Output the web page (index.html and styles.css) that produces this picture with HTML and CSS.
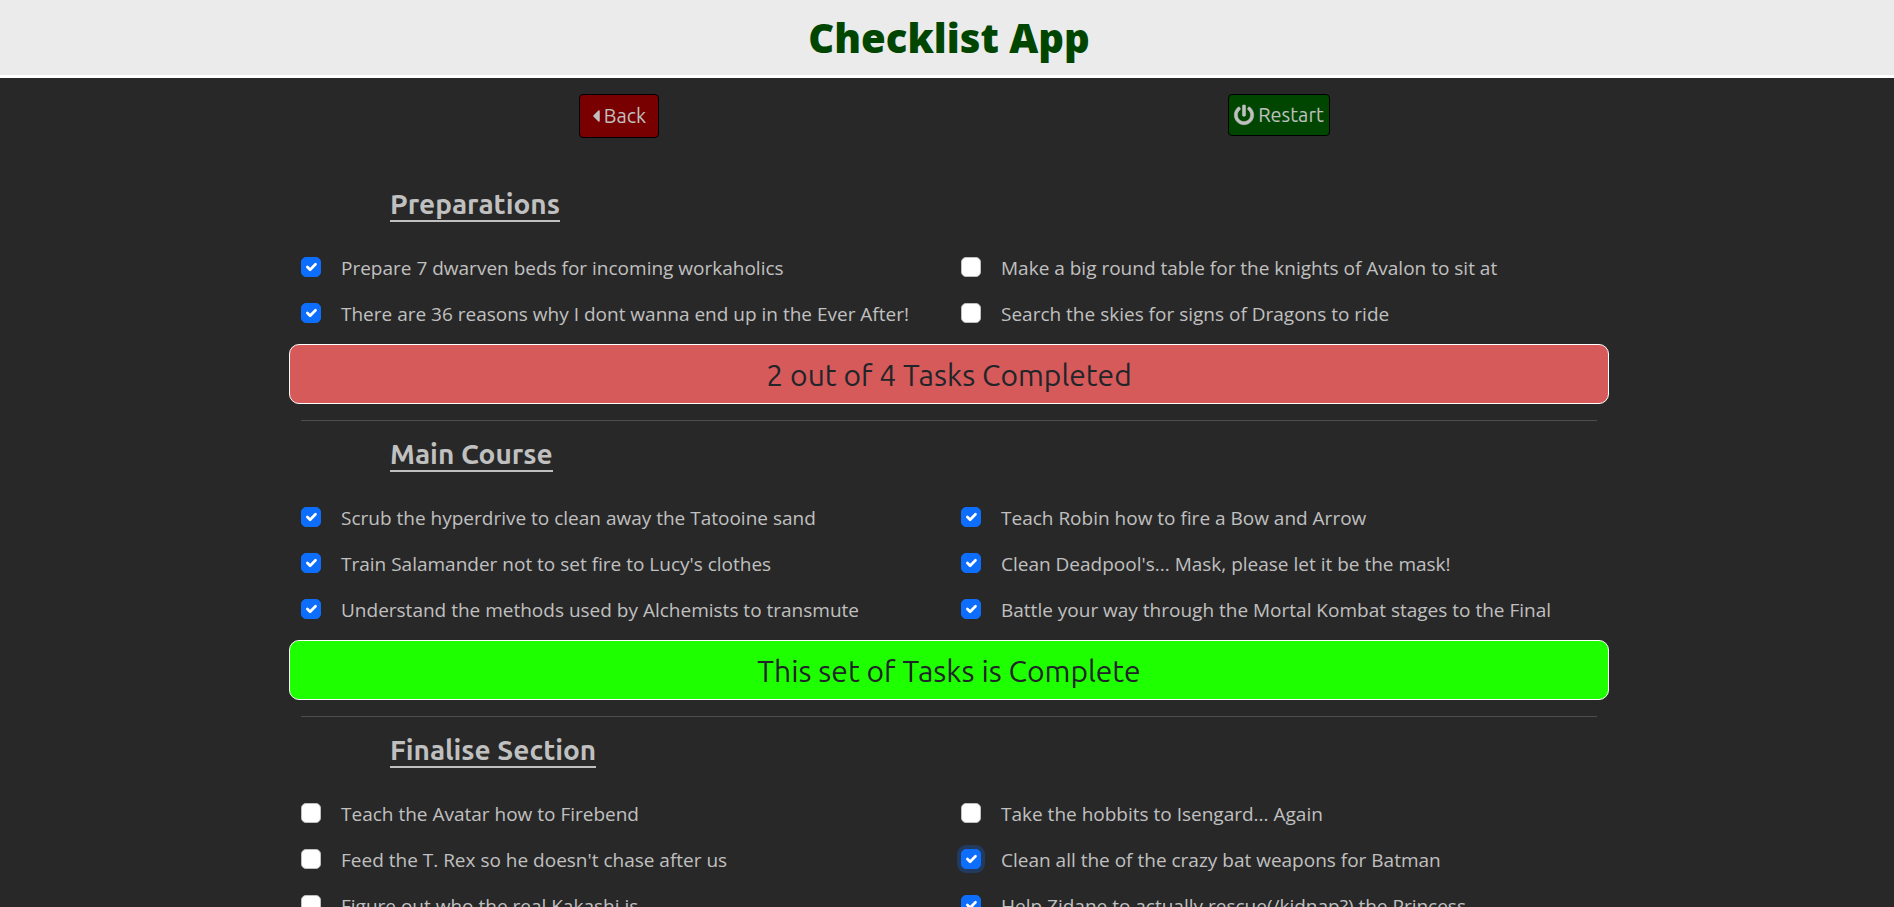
FILE: index.html
```html
<!DOCTYPE html>
<html lang="en">
<head>
<meta charset="utf-8">
<meta name="viewport" content="width=device-width, initial-scale=1">
<title>Checklist App</title>
<link rel="stylesheet" href="styles.css">
</head>
<body>
<header class="banner"><h1 class="banner-title">Checklist App</h1></header>
<main class="page">
  <div class="container">
    <nav class="actions" aria-label="Checklist actions">
      <button type="button" class="btn btn-back">
        <svg class="icon-caret" viewBox="0 0 192 512" aria-hidden="true"><path fill="currentColor" d="M192 127.338v257.324c0 17.818-21.543 26.741-34.142 14.142L29.196 270.142c-7.81-7.81-7.81-20.474 0-28.284l128.662-128.662c12.599-12.6 34.142-3.676 34.142 14.142z"/></svg>
        <span>Back</span>
      </button>
      <button type="button" class="btn btn-restart">
        <svg class="icon-power" viewBox="0 0 512 512" aria-hidden="true"><path fill="currentColor" stroke="currentColor" stroke-width="14" d="M400 54.1c63 45 104 118.6 104 201.9 0 136.8-110.8 247.7-247.5 248C120 504.3 8.2 393 8 256.4 7.9 173.1 48.9 99.3 111.8 54.2c11.7-8.3 28-4.8 35 7.7L162.6 90c5.9 10.5 3.1 23.8-6.6 31-41.5 30.8-68 79.6-68 134.9-.1 92.3 74.5 168.1 168 168.1 91.6 0 168.6-74.2 168-169.1-.3-51.8-24.7-101.8-68.1-134-9.7-7.2-12.4-20.5-6.5-30.9l15.8-28.1c7-12.4 23.2-16.1 34.8-7.8zM296 264V24c0-13.3-10.7-24-24-24h-32c-13.3 0-24 10.7-24 24v240c0 13.3 10.7 24 24 24h32c13.3 0 24-10.7 24-24z"/></svg>
        <span>Restart</span>
      </button>
    </nav>

    <section class="section">
      <h2 class="section-title">Preparations</h2>
      <div class="tasks">
        <label class="task"><input type="checkbox" class="check" checked><span>Prepare 7 dwarven beds for incoming workaholics</span></label>
        <label class="task"><input type="checkbox" class="check"><span>Make a big round table for the knights of Avalon to sit at</span></label>
        <label class="task"><input type="checkbox" class="check" checked><span>There are 36 reasons why I dont wanna end up in the Ever After!</span></label>
        <label class="task"><input type="checkbox" class="check"><span>Search the skies for signs of Dragons to ride</span></label>
      </div>
      <p class="status status-pending">2 out of 4 Tasks Completed</p>
    </section>

    <hr class="divider">

    <section class="section">
      <h2 class="section-title">Main Course</h2>
      <div class="tasks">
        <label class="task"><input type="checkbox" class="check" checked><span>Scrub the hyperdrive to clean away the Tatooine sand</span></label>
        <label class="task"><input type="checkbox" class="check" checked><span>Teach Robin how to fire a Bow and Arrow</span></label>
        <label class="task"><input type="checkbox" class="check" checked><span>Train Salamander not to set fire to Lucy's clothes</span></label>
        <label class="task"><input type="checkbox" class="check" checked><span>Clean Deadpool's... Mask, please let it be the mask!</span></label>
        <label class="task"><input type="checkbox" class="check" checked><span>Understand the methods used by Alchemists to transmute</span></label>
        <label class="task"><input type="checkbox" class="check" checked><span>Battle your way through the Mortal Kombat stages to the Final</span></label>
      </div>
      <p class="status status-done">This set of Tasks is Complete</p>
    </section>

    <hr class="divider">

    <section class="section">
      <h2 class="section-title">Finalise Section</h2>
      <div class="tasks">
        <label class="task"><input type="checkbox" class="check"><span>Teach the Avatar how to Firebend</span></label>
        <label class="task"><input type="checkbox" class="check"><span>Take the hobbits to Isengard... Again</span></label>
        <label class="task"><input type="checkbox" class="check"><span>Feed the T. Rex so he doesn't chase after us</span></label>
        <label class="task"><input type="checkbox" class="check" checked autofocus><span>Clean all the of the crazy bat weapons for Batman</span></label>
        <label class="task"><input type="checkbox" class="check"><span>Figure out who the real Kakashi is</span></label>
        <label class="task"><input type="checkbox" class="check" checked><span>Help Zidane to actually rescue(/kidnap?) the Princess</span></label>
      </div>
    </section>
  </div>
</main>
</body>
</html>
```
FILE: styles.css
```css
* { box-sizing: border-box; }

html { scrollbar-width: none; }

body {
  margin: 0;
  background: #282828;
  color: #c0c0c0;
  font-family: "Segoe UI", "Open Sans", "Noto Sans", sans-serif;
  font-size: 19px;
  line-height: 30px;
}

.banner {
  padding: 14px 0 13px 4px;
  background: #ebebeb;
  border-bottom: 3px solid #fff;
}

.banner-title {
  margin: 0;
  color: #004600;
  font-family: "Open Sans", sans-serif;
  font-size: 40px;
  font-weight: 800;
  line-height: 48px;
  text-align: center;
}

.page { padding-left: 4px; }

.container {
  max-width: 1320px;
  margin: 0 auto;
}

.actions {
  display: grid;
  grid-template-columns: 1fr 1fr;
  align-items: start;
  justify-items: center;
  padding: 16px 0 49px;
}

.btn {
  display: flex;
  align-items: center;
  gap: 4px;
  border: 1px solid #000;
  border-radius: 4px;
  color: #c0c0c0;
  font-family: Ubuntu, "Noto Sans", sans-serif;
  font-size: 20px;
  line-height: 30px;
  cursor: pointer;
}

.btn-back {
  padding: 6px 12px;
  background: #780000;
}

.btn-restart {
  padding: 5px;
  background: #004600;
}

.icon-caret { width: 8px; height: 20px; }

.icon-power {
  width: 20px;
  height: 20px;
  overflow: visible;
}

.section-title {
  width: fit-content;
  margin: 0 0 31px 101px;
  border-bottom: 2px solid #c0c0c0;
  font-family: Ubuntu, "Noto Sans", sans-serif;
  font-size: 28px;
  font-weight: 600;
  line-height: 33px;
}

.tasks {
  display: grid;
  grid-template-columns: 1fr 1fr;
  row-gap: 16px;
}

.task {
  display: flex;
  align-items: flex-start;
  gap: 20px;
  padding-left: 12px;
}

.check {
  flex: none;
  width: 20px;
  height: 20px;
  margin: 4px 0 0;
  appearance: none;
  background: #fff center / contain no-repeat;
  border: 1px solid #bfbfbf;
  border-radius: 5px;
}

.check:checked {
  background-color: #0d6efd;
  background-image: url("data:image/svg+xml,%3csvg xmlns='http://www.w3.org/2000/svg' viewBox='0 0 20 20'%3e%3cpath fill='none' stroke='%23fff' stroke-linecap='round' stroke-linejoin='round' stroke-width='3' d='M6 10l3 3l6-6'/%3e%3c/svg%3e");
  border-color: #0d6efd;
}

.check:focus {
  outline: none;
  box-shadow: 0 0 0 4px rgba(13, 110, 253, 0.25);
}

.status {
  margin: 15px 0 16px;
  padding: 6px 5px 4px;
  border: 1px solid #fff;
  border-radius: 10px;
  color: #212529;
  font-family: Ubuntu, "Noto Sans", sans-serif;
  font-size: 30px;
  line-height: 48px;
  text-align: center;
}

.status-pending { background: #d65a5a; }
.status-done { background: #1eff00; }

.divider {
  height: 1px;
  margin: 0 12px 16px;
  border: 0;
  background: #4e4e4e;
}
```
